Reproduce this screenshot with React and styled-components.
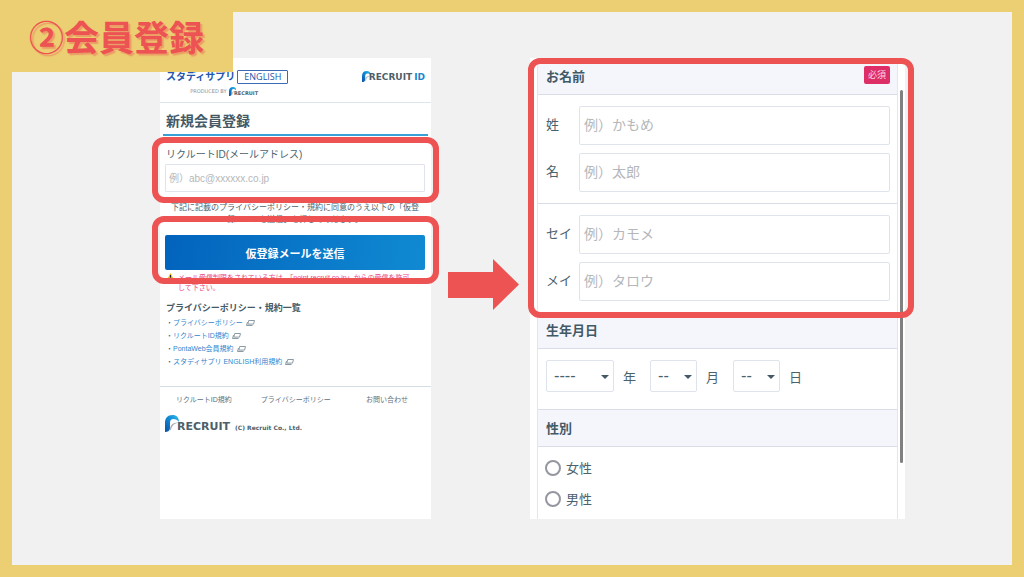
import { useId } from "react";
import styled, { createGlobalStyle } from "styled-components";

const GlobalStyle = createGlobalStyle`
  * {
    box-sizing: border-box;
  }

  body {
    margin: 0;
    color: #4a626e;
    font-family: "Liberation Sans", "Noto Sans CJK JP", sans-serif;
  }
`;

const Slide = styled.div`
  position: relative;
  display: grid;
  grid-template-columns: 271fr 99px 375fr;
  min-height: 100vh;
  padding: 46px 107px 46px 148px;
  border: 12px solid #ecce73;
  background-color: #f1f1f1;
`;

const SlideTitle = styled.h1`
  position: absolute;
  top: -12px;
  left: -12px;
  margin: 0;
  padding: 12px 29px;
  background-color: #ecce73;
  color: #ec5352;
  font-family: "Noto Sans CJK JP", sans-serif;
  font-size: 35px;
  line-height: 48px;
  text-shadow: 2px 2px 1px rgba(236, 83, 82, 0.4);
`;

const Arrow = styled.svg`
  align-self: center;
  width: 71px;
  height: 51px;
  margin: 0 0 9px 17px;
  fill: #ec5352;
`;

const Panel = styled.section`
  min-width: 0;
  background-color: #fff;
`;

const Highlight = styled.div`
  position: relative;

  &::after {
    content: "";
    position: absolute;
    inset: ${({ $inset }) => $inset};
    border: 6px solid #ec5352;
    border-radius: 12px;
    pointer-events: none;
  }
`;

const SiteHeader = styled.header`
  display: flex;
  align-items: flex-start;
  justify-content: space-between;
  height: 45px;
  padding: 11px 6px 0;
  border-bottom: 1px solid #dde6ec;
`;

const Brand = styled.div`
  display: flex;
  flex-direction: column;
  align-items: center;
`;

const BrandRow = styled.div`
  display: flex;
  align-items: center;
  gap: 2px;
  color: #2457ad;
  font-size: 10px;
  font-weight: 700;
  line-height: 15px;
`;

const EnglishBadge = styled.span`
  padding: 0 6px;
  border: 1px solid #3c69b8;
  border-radius: 1px;
  font-family: "Open Sans", sans-serif;
  font-size: 9px;
  font-weight: 400;
  line-height: 12px;
`;

const ProducedBy = styled.div`
  display: flex;
  align-items: center;
  gap: 2px;
  padding-right: 6px;
  color: #8b9196;
  font-family: "DejaVu Sans", sans-serif;
  font-size: 5px;
  line-height: 14px;
`;

const LogoBox = styled.span`
  display: inline-flex;
  align-items: flex-end;
  color: #4d5f6b;
  font-family: "DejaVu Sans", sans-serif;
  font-size: ${({ $size }) => $size}px;
  font-weight: 700;
  line-height: 1;

  svg {
    height: ${({ $mark }) => $mark}px;
    margin-right: -2px;
  }
`;

const HeaderLogo = styled.div`
  display: flex;
  padding-top: 2px;
`;

const LogoId = styled.span`
  margin-left: 2px;
  color: #1a86cc;
`;

const PageTitle = styled.h2`
  margin: 0 3px;
  padding: 6px 3px 0;
  border-bottom: 2px solid #3aa0d8;
  color: #435a66;
  font-size: 14px;
  line-height: 25px;
`;

const MailForm = styled.form`
  padding: 11px 6px 0 5px;
`;

const MailLabel = styled.label`
  display: block;
  padding-left: 1px;
  font-size: 10px;
  line-height: 16px;
`;

const TextInput = styled.input`
  display: block;
  width: 100%;
  border: 1px solid #dfe3ec;
  border-radius: 1px;
  background-color: #fff;
  color: inherit;
  font-family: inherit;
  outline: none;

  &::placeholder {
    color: #b5b7ba;
    opacity: 1;
  }
`;

const MailInput = styled(TextInput)`
  height: 28px;
  margin-top: 1px;
  padding: 0 3px;
  font-size: 10px;
`;

const Note = styled.p`
  margin: 10px 0 9px;
  font-size: 8px;
  line-height: 12px;
  text-align: center;
`;

const SubmitButton = styled.button`
  display: block;
  width: 100%;
  height: 35px;
  border: 0;
  border-radius: 2px;
  background: linear-gradient(100deg, #0263bd, #108ad2);
  color: #fff;
  font-family: inherit;
  font-size: 11px;
  font-weight: 700;
`;

const Warning = styled.p`
  display: flex;
  gap: 4px;
  margin: 3px 0 7px;
  padding: 0 6px 0 2px;
  color: #e8487f;
  font-size: 7px;
  line-height: 10px;

  svg {
    flex: none;
    width: 7px;
    height: 7px;
  }
`;

const PolicyBlock = styled.div`
  padding: 0 6px 18px;
`;

const PolicyTitle = styled.h3`
  margin: 0;
  color: #435a66;
  font-size: 9px;
  line-height: 16px;
`;

const PolicyList = styled.ul`
  margin: 0;
  padding: 0;
  list-style: none;
  font-size: 7px;
  line-height: 13px;

  a {
    color: #2f86cf;
    text-decoration: none;
  }

  svg {
    width: 9px;
    height: 6px;
    margin-left: 3px;
    vertical-align: -1px;
  }
`;

const SiteFooter = styled.footer`
  border-top: 1px solid #d3dfe7;
`;

const FooterNav = styled.nav`
  display: flex;
  gap: 29px;
  padding: 6px 23px 0 16px;
  font-size: 7px;
  line-height: 14px;

  a {
    color: #5d707b;
    text-decoration: none;
  }

  a:last-child {
    margin-left: auto;
  }
`;

const Copyright = styled.div`
  display: flex;
  align-items: flex-end;
  gap: 5px;
  padding: 8px 5px 0;

  small {
    font-family: "DejaVu Sans", sans-serif;
    font-size: 6px;
    font-weight: 700;
    line-height: 9px;
  }
`;

const ProfilePanel = styled(Panel)`
  display: flex;
  padding-left: 7px;
`;

const ProfileForm = styled.form`
  display: flex;
  flex: 1;
  flex-direction: column;
  min-width: 0;
  border: solid #e3e5ef;
  border-width: 0 1px;
`;

const ScrollThumb = styled.div`
  flex: none;
  width: 3px;
  height: 81%;
  margin: 32px 2px 0;
  border-radius: 2px;
  background-color: #808080;
`;

const SectionTitle = styled.h2`
  display: flex;
  align-items: center;
  justify-content: space-between;
  height: 37px;
  margin: 0;
  padding: 0 7px 2px 8px;
  border-bottom: 1px solid #dadde9;
  background-color: #f5f6fc;
  color: #435a66;
  font-size: 13px;
`;

const Required = styled.span`
  padding: 0 4px;
  border-radius: 2px;
  background-color: #de2e68;
  color: #fbd5e2;
  font-size: 9px;
  font-weight: 400;
  line-height: 18px;
`;

const NameGroup = styled.div`
  display: grid;
  gap: 8px;
  padding: 11px 7px 11px 8px;

  & + & {
    border-top: 1px solid #dadde9;
  }
`;

const NameRow = styled.div`
  display: grid;
  grid-template-columns: 33px 1fr;
  align-items: center;
  font-size: 13px;

  label {
    padding-bottom: 4px;
  }
`;

const NameInput = styled(TextInput)`
  height: 39px;
  padding: 0 4px 2px;
  border-radius: 2px;
  font-size: 14px;
`;

const BirthRow = styled.div`
  display: flex;
  padding: 11px 7px 17px 8px;
  border-bottom: 1px solid #dadde9;
`;

const BirthField = styled.label`
  display: flex;
  align-items: center;
  gap: 9px;
  margin-right: 14px;
  font-size: 13px;
`;

const SelectBox = styled.span`
  position: relative;
  width: ${({ $wide }) => ($wide ? 68 : 47)}px;

  &::after {
    content: "";
    position: absolute;
    top: 15px;
    right: 5px;
    border: solid transparent;
    border-width: 4px 4px 0;
    border-top-color: #435a66;
    pointer-events: none;
  }
`;

const Select = styled.select`
  display: block;
  width: 100%;
  height: 32px;
  padding: 0 7px;
  border: 1px solid #dfe3ec;
  border-radius: 2px;
  background-color: #fff;
  color: #4a626e;
  font-family: "DejaVu Sans", sans-serif;
  font-size: 15px;
  appearance: none;
`;

const GenderGroup = styled.div`
  flex: 1;
  padding: 5px 7px 0;
`;

const GenderLabel = styled.label`
  display: flex;
  align-items: center;
  gap: 5px;
  height: 31px;
  font-size: 13px;
`;

const Radio = styled.input`
  width: 16px;
  height: 16px;
  margin: 0;
  border: 2px solid #9496a0;
  border-radius: 50%;
  background-color: #fff;
  appearance: none;

  &:checked {
    border-width: 5px;
  }
`;

function RecruitLogo({ size, mark, id }) {
  const gradient = useId();

  return (
    <LogoBox $size={size} $mark={mark}>
      <svg viewBox="0 0 14 17" aria-hidden="true">
        <defs>
          <linearGradient id={gradient} x1="0" y1="1" x2="1" y2="0">
            <stop offset="0" stopColor="#0b4fa8" />
            <stop offset="0.6" stopColor="#1490d8" />
            <stop offset="1" stopColor="#35bdea" />
          </linearGradient>
        </defs>
        <path
          d="M0 17V8C0 3 2.5 0 7.5 0 11.500 0 14 2.500 14 7c-1.500-2-3.500-3-5.500-3C6 4 5 5.500 5 8v5c0 2.500-2 4-5 4z"
          fill={`url(#${gradient})`}
        />
        <path d="M5 15c0-5 3-8 9-7.500-4 .5-6.500 2.500-7.500 5.500C6 15 4.500 16.500 2 17c2-.5 3-1 3-2z" fill="#a3adb5" />
      </svg>
      RECRUIT
      {id && <LogoId>ID</LogoId>}
    </LogoBox>
  );
}

function WindowIcon() {
  return (
    <svg viewBox="0 0 9 6" aria-hidden="true">
      <path d="M1.500 2 .5 5.500h6" fill="none" stroke="#8b9aa3" />
      <path d="M2.700.5h5.800l-1 3.600H1.800z" fill="#fff" stroke="#8b9aa3" />
    </svg>
  );
}

const policies = [
  "プライバシーポリシー",
  "リクルートID規約",
  "PontaWeb会員規約",
  "スタディサプリ ENGLISH利用規約",
];

const nameGroups = [
  [
    { id: "sei", label: "姓", placeholder: "例）かもめ" },
    { id: "mei", label: "名", placeholder: "例）太郎" },
  ],
  [
    { id: "sei-kana", label: "セイ", placeholder: "例）カモメ" },
    { id: "mei-kana", label: "メイ", placeholder: "例）タロウ" },
  ],
];

function BirthSelect({ unit, empty, wide }) {
  return (
    <BirthField>
      <SelectBox $wide={wide}>
        <Select defaultValue="">
          <option value="">{empty}</option>
        </Select>
      </SelectBox>
      {unit}
    </BirthField>
  );
}

function MailScreen() {
  return (
    <Panel>
      <SiteHeader>
        <Brand>
          <BrandRow>
            スタディサプリ<EnglishBadge>ENGLISH</EnglishBadge>
          </BrandRow>
          <ProducedBy>
            PRODUCED BY
            <RecruitLogo size={5} mark={9} />
          </ProducedBy>
        </Brand>
        <HeaderLogo>
          <RecruitLogo size={9} mark={11} id />
        </HeaderLogo>
      </SiteHeader>
      <PageTitle>新規会員登録</PageTitle>
      <MailForm onSubmit={(event) => event.preventDefault()}>
        <Highlight $inset="-10px -14px -11px -13px">
          <MailLabel htmlFor="mail">リクルートID(メールアドレス)</MailLabel>
          <MailInput id="mail" type="email" placeholder="例）abc@xxxxxx.co.jp" />
        </Highlight>
        <Note>
          下記に記載のプライバシーポリシー・規約に同意のうえ以下の「仮登
          <br />
          録メールを送信」を押してください。
        </Note>
        <Highlight $inset="-19px -14px -14px -13px">
          <SubmitButton>仮登録メールを送信</SubmitButton>
        </Highlight>
        <Warning>
          <svg viewBox="0 0 7 7" aria-hidden="true">
            <path d="M3.500 0 7 7H0z" fill="#f0b400" />
            <path d="M3.500 2v2.600M3.500 5.200v1" stroke="#222" />
          </svg>
          <span>
            メール受信制限をされている方は、「point.recruit.co.jp」からの受信を許可
            <br />
            して下さい。
          </span>
        </Warning>
      </MailForm>
      <PolicyBlock>
        <PolicyTitle>プライバシーポリシー・規約一覧</PolicyTitle>
        <PolicyList>
          {policies.map((policy) => (
            <li key={policy}>
              ・<a href="#policy">{policy}</a>
              <WindowIcon />
            </li>
          ))}
        </PolicyList>
      </PolicyBlock>
      <SiteFooter>
        <FooterNav>
          <a href="#terms">リクルートID規約</a>
          <a href="#privacy">プライバシーポリシー</a>
          <a href="#contact">お問い合わせ</a>
        </FooterNav>
        <Copyright>
          <RecruitLogo size={11} mark={17} />
          <small>(C) Recruit Co., Ltd.</small>
        </Copyright>
      </SiteFooter>
    </Panel>
  );
}

function ProfileScreen() {
  return (
    <ProfilePanel>
      <ProfileForm>
        <Highlight $inset="0 -17px -6px -10px">
          <SectionTitle>
            お名前<Required>必須</Required>
          </SectionTitle>
          {nameGroups.map((group) => (
            <NameGroup key={group[0].id}>
              {group.map(({ id, label, placeholder }) => (
                <NameRow key={id}>
                  <label htmlFor={id}>{label}</label>
                  <NameInput id={id} placeholder={placeholder} />
                </NameRow>
              ))}
            </NameGroup>
          ))}
        </Highlight>
        <SectionTitle>生年月日</SectionTitle>
        <BirthRow>
          <BirthSelect unit="年" empty="----" wide />
          <BirthSelect unit="月" empty="--" />
          <BirthSelect unit="日" empty="--" />
        </BirthRow>
        <SectionTitle>性別</SectionTitle>
        <GenderGroup>
          <GenderLabel>
            <Radio type="radio" name="gender" />
            女性
          </GenderLabel>
          <GenderLabel>
            <Radio type="radio" name="gender" />
            男性
          </GenderLabel>
        </GenderGroup>
      </ProfileForm>
      <ScrollThumb />
    </ProfilePanel>
  );
}

export default function App() {
  return (
    <>
      <GlobalStyle />
      <Slide>
        <MailScreen />
        <Arrow viewBox="0 0 71 51" aria-hidden="true">
          <path d="M0 13h45V0l26 25.500L45 51V39H0z" />
        </Arrow>
        <ProfileScreen />
        <SlideTitle>②会員登録</SlideTitle>
      </Slide>
    </>
  );
}
